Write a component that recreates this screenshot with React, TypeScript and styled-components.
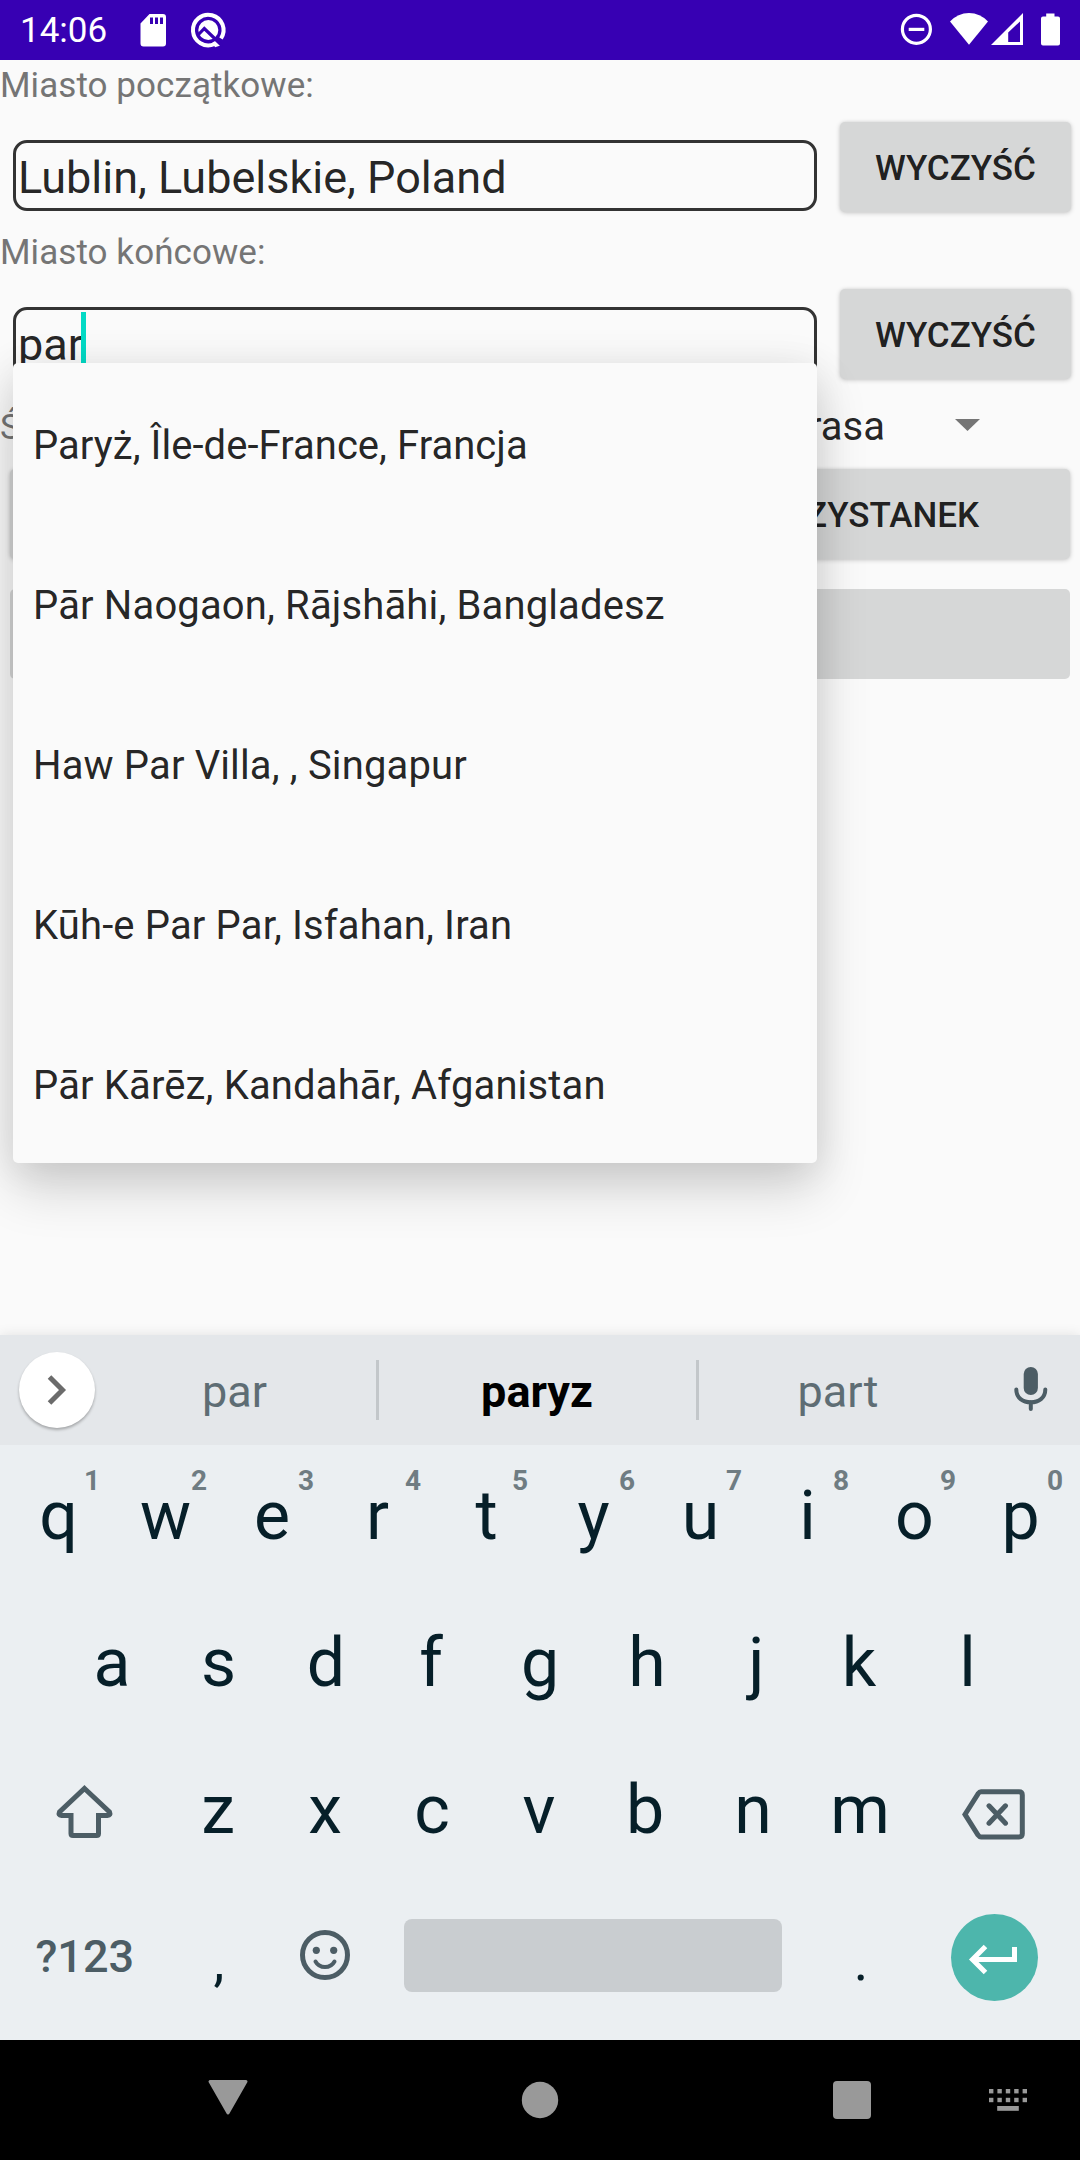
import React from "react";
import styled, { createGlobalStyle } from "styled-components";

const GlobalStyle = createGlobalStyle`
  *, *::before, *::after { box-sizing: border-box; }
  body { margin: 0; background: #fafafa; }
`;

const ink = "rgba(0, 0, 0, 0.87)";
const keyInk = "#061f29";
const keyMuted = "#4c5d65";

const Screen = styled.div`
  position: relative;
  display: flex;
  flex-direction: column;
  width: 1080px;
  height: 2160px;
  overflow: hidden;
  background: #fafafa;
  color: ${ink};
  font-family: Roboto, "Noto Sans", sans-serif;
  white-space: nowrap;
  svg { display: block; flex: none; }
`;

const StatusBar = styled.header`
  flex: none;
  display: flex;
  align-items: center;
  height: 60px;
  padding: 0 20px;
  background: #3700b3;
  color: #fff;
`;
const Clock = styled.span`
  width: 120px;
  padding-top: 2px;
  font-size: 35px;
  line-height: 60px;
`;
const StatusGroup = styled.div<{ $end?: boolean }>`
  display: flex;
  align-items: center;
  height: 60px;
  margin-left: ${(p) => (p.$end ? "auto" : "0")};
`;

const Form = styled.main`
  flex: none;
  height: 1275px;
  display: flex;
  flex-direction: column;
`;
const Label = styled.label`
  flex: none;
  height: 47px;
  padding-top: 5px;
  font-size: 35px;
  line-height: 42px;
  letter-spacing: 0.06px;
  color: #757575;
`;
const FieldRow = styled.div`
  flex: none;
  display: flex;
  justify-content: space-between;
  height: 120px;
  padding: 15px 9px 0 13px;
`;
const Field = styled.div`
  display: flex;
  align-items: center;
  width: 804px;
  height: 71px;
  margin-top: 18px;
  padding: 4px 0 0 2px;
  border: 3px solid #333;
  border-radius: 14px;
  font-size: 45px;
  line-height: 54px;
`;
const Caret = styled.span`
  width: 5px;
  height: 61px;
  margin: -4px 0 0 -2px;
  background: #03dac5;
`;
const Button = styled.button<{ $width?: number; $disabled?: boolean }>`
  flex: ${(p) => (p.$width ? "none" : 1)};
  width: ${(p) => (p.$width ? p.$width + "px" : "auto")};
  height: 90px;
  padding: 3px 0 0;
  border: 0;
  border-radius: 5px;
  background: #d6d7d7;
  box-shadow: ${(p) => (p.$disabled ? "none" : "0 1px 5px rgba(0, 0, 0, 0.2), 0 0 3px rgba(0, 0, 0, 0.06)")};
  color: ${ink};
  font: 500 35px/87px Roboto, "Noto Sans", sans-serif;
`;
const ButtonRow = styled.div`
  flex: none;
  display: flex;
  gap: 20px;
  height: 120px;
  padding: 15px 10px;
`;
const ModeRow = styled.div`
  flex: none;
  display: grid;
  grid-template-columns: 540px 345px 1fr;
  align-items: center;
  height: 60px;
`;
const ModeLabel = styled.span`
  font-size: 35px;
  line-height: 42px;
  padding-top: 7px;
  color: #757575;
`;
const ModeValue = styled.span`
  font-size: 40px;
  line-height: 46px;
  padding-top: 6px;
  text-align: right;
`;
const ModeArrow = styled.svg`
  margin: 2px 0 0 70px;
`;

const Suggestions = styled.ul`
  position: absolute;
  z-index: 2;
  left: 13px;
  top: 363px;
  width: 804px;
  margin: 0;
  padding: 0;
  list-style: none;
  background: #fafafa;
  border-radius: 5px;
  box-shadow: 0 26px 52px rgba(0, 0, 0, 0.16), 0 4px 40px rgba(0, 0, 0, 0.09);
`;
const Suggestion = styled.li`
  height: 160px;
  padding: 3px 0 0 20px;
  font-size: 40px;
  line-height: 160px;
  letter-spacing: 0.14px;
  &:first-child { letter-spacing: 0.04px; }
`;

const Keyboard = styled.section`
  position: relative;
  z-index: 3;
  flex: none;
  height: 705px;
  background: #ebeff2;
  box-shadow: 0 0 12px rgba(0, 0, 0, 0.1);
`;
const Strip = styled.div`
  display: grid;
  grid-template-columns: 94px 282px 3px 317px 3px 279px 102px;
  align-items: center;
  height: 110px;
  background: #e4e7ea;
`;
const Expand = styled.div`
  display: flex;
  align-items: center;
  justify-content: center;
  width: 76px;
  height: 76px;
  margin: -1px 0 0 19px;
  padding-right: 1px;
  border-radius: 50%;
  background: #fff;
  box-shadow: 0 2px 3px rgba(0, 0, 0, 0.28);
`;
const Word = styled.span<{ $main?: boolean }>`
  padding: 4px 1px 0 0;
  text-align: center;
  font-size: 45px;
  line-height: 54px;
  font-weight: ${(p) => (p.$main ? 700 : 400)};
  color: ${(p) => (p.$main ? "#000" : "#5e6d74")};
`;
const Divider = styled.i`
  height: 60px;
  background: #c3c7ca;
`;
const Keys = styled.div`
  padding: 0 5px;
`;
const KeyRow = styled.div<{ $shift?: boolean }>`
  display: flex;
  justify-content: center;
  height: 147px;
  margin-left: ${(p) => (p.$shift ? "-1px" : "0")};
  margin-right: ${(p) => (p.$shift ? "1px" : "0")};
`;
const Key = styled.div<{ $nudge?: number }>`
  position: relative;
  display: flex;
  justify-content: center;
  width: 107px;
  height: 147px;
  padding-top: 31px;
  font-size: 68px;
  line-height: 80px;
  text-indent: ${(p) => p.$nudge ?? 0}px;
  color: ${keyInk};
`;
const Hint = styled.span`
  position: absolute;
  top: 20px;
  left: 74px;
  width: 26px;
  text-align: center;
  text-indent: 0;
  font-size: 28px;
  line-height: 32px;
  font-weight: 700;
  color: #6f7c82;
`;
const IconKey = styled.div<{ $wide?: boolean; $top: number }>`
  display: flex;
  justify-content: center;
  align-items: flex-start;
  width: ${(p) => (p.$wide ? 160.5 : 107)}px;
  padding-top: ${(p) => p.$top}px;
`;
const SymbolKey = styled.div`
  width: 160.5px;
  padding: 44px 0 0 1px;
  text-align: center;
  font-size: 45px;
  line-height: 54px;
  font-weight: 500;
  color: ${keyMuted};
`;
const PunctKey = styled.div`
  width: 107px;
  padding: 43px 0 0 2px;
  text-align: center;
  font-size: 55px;
  line-height: 64px;
  color: ${keyInk};
`;
const SpaceKey = styled.div`
  width: 378px;
  height: 73px;
  margin: 33px 24.5px 0 25.5px;
  border-radius: 8px;
  background: #c9cdd0;
`;
const Enter = styled.div`
  display: flex;
  align-items: center;
  justify-content: center;
  width: 87px;
  height: 87px;
  margin-left: 1px;
  border-radius: 50%;
  background: #4db6ac;
`;

const NavBar = styled.nav`
  position: relative;
  z-index: 3;
  flex: none;
  display: grid;
  grid-template-columns: 228px 312px 312px 156px 72px;
  height: 120px;
  background: #000;
`;
const NavItem = styled.div`
  display: flex;
  align-items: center;
  justify-content: flex-end;
  svg { margin-right: -32px; }
`;

const cities = [
  "Paryż, Île-de-France, Francja",
  "Pār Naogaon, Rājshāhi, Bangladesz",
  "Haw Par Villa, , Singapur",
  "Kūh-e Par Par, Isfahan, Iran",
  "Pār Kārēz, Kandahār, Afganistan",
];

// Optical corrections for letters whose ink is off the centre of their advance.
const nudges: Record<string, number> = { e: -1, r: -4, p: -2, f: -4, j: 5, k: -4, l: -1, s: -1, b: -2 };

const StatusLeft = () => (
  <svg width="92" height="60" viewBox="140 0 92 60" fill="#fff">
    <path
      fillRule="evenodd"
      d="M149.5 14H163Q166 14 166 17V43.5Q166 46.5 163 46.5H143.500Q140.500 46.5 140.500 43.500V23.500ZM150 17.500V24H153V17.500ZM155 17.500V24H158V17.500ZM160 17.500V24H163V17.500Z"
    />
    <path d="M221 38.500A15.300 15.300 0 1 0 214.500 44" fill="none" stroke="#fff" strokeWidth="4" />
    <path d="M212.500 42.500L216 40.500L220.500 45.500L215 47.300Z" />
    <circle cx="208.300" cy="30" r="10" />
    <path d="M198.500 34.500L204.300 28.500L222.500 46" fill="none" stroke="#3700b3" strokeWidth="3.200" />
  </svg>
);

const StatusRight = () => (
  <svg width="160" height="60" viewBox="900 0 160 60" fill="#fff">
    <circle cx="916.400" cy="29.300" r="14" fill="none" stroke="#fff" strokeWidth="3.200" />
    <rect x="908.700" y="27.800" width="15.600" height="3.200" />
    <path d="M950 21.500Q958 13 969 13T988 21.500L969 44.700Z" />
    <path fillRule="evenodd" d="M1023 13V45H991ZM1020 21.500L1008.200 32.500V42H1020Z" />
    <path d="M1046.200 13.500H1054.500V16.500H1058Q1060 16.500 1060 18.500V43.500Q1060 45.500 1058 45.500H1043Q1041 45.500 1041 43.500V18.500Q1041 16.500 1043 16.500H1046.200Z" />
  </svg>
);

const Letter = ({ char, hint }: { char: string; hint?: number }) => (
  <Key $nudge={nudges[char]}>
    {char}
    {hint !== undefined && <Hint>{hint}</Hint>}
  </Key>
);

export default function App() {
  return (
    <>
      <GlobalStyle />
      <Screen>
        <StatusBar>
          <Clock>14:06</Clock>
          <StatusGroup>
            <StatusLeft />
          </StatusGroup>
          <StatusGroup $end>
            <StatusRight />
          </StatusGroup>
        </StatusBar>

        <Form>
          <Label>Miasto początkowe:</Label>
          <FieldRow>
            <Field>Lublin, Lubelskie, Poland</Field>
            <Button $width={231}>WYCZYŚĆ</Button>
          </FieldRow>
          <Label>Miasto końcowe:</Label>
          <FieldRow>
            <Field>
              par
              <Caret />
            </Field>
            <Button $width={231}>WYCZYŚĆ</Button>
          </FieldRow>
          <ModeRow>
            <ModeLabel>Ś</ModeLabel>
            <ModeValue>Trasa</ModeValue>
            <ModeArrow width="25" height="12" viewBox="0 0 25 12">
              <path d="M0 0H25L12.500 12Z" fill="#757575" />
            </ModeArrow>
          </ModeRow>
          <ButtonRow>
            <Button />
            <Button>DODAJ PRZYSTANEK</Button>
          </ButtonRow>
          <ButtonRow>
            <Button $disabled />
          </ButtonRow>
        </Form>

        <Suggestions>
          {cities.map((city) => (
            <Suggestion key={city}>{city}</Suggestion>
          ))}
        </Suggestions>

        <Keyboard>
          <Strip>
            <Expand>
              <svg width="20" height="30" viewBox="0 0 20 30">
                <path d="M2.500 2L15.500 15L2.500 28" fill="none" stroke="#6b6b6b" strokeWidth="5" />
              </svg>
            </Expand>
            <Word>par</Word>
            <Divider />
            <Word $main>paryz</Word>
            <Divider />
            <Word>part</Word>
            <svg width="102" height="110" viewBox="978 1335 102 110">
              <rect x="1023.700" y="1367" width="14.200" height="28" rx="7.100" fill={keyMuted} />
              <path
                d="M1016.300 1389.500C1016.300 1398 1023 1402.300 1030.800 1402.300S1045.300 1398 1045.300 1389.500M1030.800 1402V1409"
                fill="none"
                stroke={keyMuted}
                strokeWidth="4"
                strokeLinecap="round"
              />
            </svg>
          </Strip>
          <Keys>
            <KeyRow>
              {"qwertyuiop".split("").map((k, i) => (
                <Letter key={k} char={k} hint={(i + 1) % 10} />
              ))}
            </KeyRow>
            <KeyRow>
              {"asdfghjkl".split("").map((k) => (
                <Letter key={k} char={k} />
              ))}
            </KeyRow>
            <KeyRow $shift>
              <IconKey $wide $top={44}>
                <svg width="60" height="60" viewBox="55 1783 60 60">
                  <path
                    d="M85.500 1788.500L110.500 1812Q112 1815.500 108.500 1815.500H99.500V1833.500Q99.500 1835.500 97.500 1835.500H74Q72 1835.500 72 1833.500V1815.500H62.500Q59 1815.500 60.500 1812Z"
                    fill="none"
                    stroke={keyMuted}
                    strokeWidth="5"
                  />
                </svg>
              </IconKey>
              {"zxcvbnm".split("").map((k) => (
                <Letter key={k} char={k} />
              ))}
              <IconKey $wide $top={50}>
                <svg width="64" height="52" viewBox="962 1789 64 52">
                  <path
                    d="M981 1791.800H1019Q1022.300 1791.800 1022.300 1795V1833.800Q1022.300 1837 1019 1837H981Q979.500 1837 978 1835L965 1814.400L978 1793.800Q979.500 1791.800 981 1791.800ZM989 1805.800L1005.500 1823.200M1005.500 1805.800L989 1823.200"
                    fill="none"
                    stroke={keyMuted}
                    strokeWidth="5"
                    strokeLinecap="round"
                  />
                </svg>
              </IconKey>
            </KeyRow>
            <KeyRow $shift>
              <SymbolKey>?123</SymbolKey>
              <PunctKey>,</PunctKey>
              <IconKey $top={44}>
                <svg width="50" height="50" viewBox="0 0 50 50" fill="none" stroke={keyMuted}>
                  <circle cx="25" cy="25" r="22.500" strokeWidth="5" />
                  <path d="M15.500 31.500Q18.500 37 25 37T34.500 31.500" strokeWidth="4" strokeLinecap="round" />
                  <circle cx="16.300" cy="20.300" r="3.600" fill={keyMuted} stroke="none" />
                  <circle cx="33.700" cy="20.300" r="3.600" fill={keyMuted} stroke="none" />
                </svg>
              </IconKey>
              <SpaceKey />
              <PunctKey>.</PunctKey>
              <IconKey $wide $top={28}>
                <Enter>
                  <svg width="87" height="87" viewBox="951 1914 87 87" fill="none" stroke="#fff" strokeWidth="5">
                    <path d="M1014.500 1947V1959.500H973M985.500 1946.500L972.500 1959.500L985.500 1972.500" />
                  </svg>
                </Enter>
              </IconKey>
            </KeyRow>
          </Keys>
        </Keyboard>

        <NavBar>
          <NavItem>
            <svg width="64" height="64" viewBox="0 0 64 64">
              <path d="M14 13.500H50L32 45Z" fill="#999" stroke="#999" strokeWidth="3" strokeLinejoin="round" />
            </svg>
          </NavItem>
          <NavItem>
            <svg width="64" height="64" viewBox="0 0 64 64">
              <circle cx="32" cy="32" r="18.200" fill="#999" />
            </svg>
          </NavItem>
          <NavItem>
            <svg width="64" height="64" viewBox="0 0 64 64">
              <rect x="13" y="13" width="38" height="38" rx="4" fill="#999" />
            </svg>
          </NavItem>
          <NavItem>
            <svg width="64" height="64" viewBox="0 0 64 64" fill="#999">
              {[0, 1, 2, 3, 4].map((i) => (
                <React.Fragment key={i}>
                  <rect x={13 + i * 8.4} y="21" width="4.400" height="4.400" />
                  <rect x={13 + i * 8.4} y="29.800" width="4.400" height="4.400" />
                </React.Fragment>
              ))}
              <rect x="21.200" y="38" width="21.600" height="4.800" />
            </svg>
          </NavItem>
        </NavBar>
      </Screen>
    </>
  );
}
